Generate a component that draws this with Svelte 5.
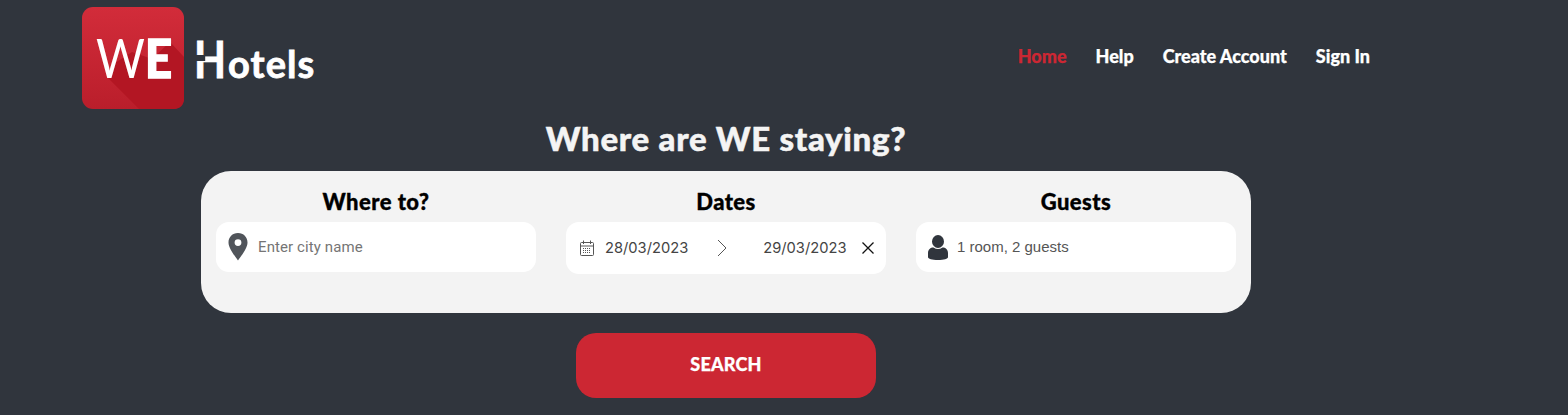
<script lang="ts">
  const links = [
    { label: 'Home', active: true },
    { label: 'Help' },
    { label: 'Create Account' },
    { label: 'Sign In' },
  ];
</script>

<div class="page">
  <header class="top">
    <a class="brand" href="#home">
      <svg class="mark" width="102" height="102" viewBox="0 0 102 102">
        <defs>
          <linearGradient id="redfade" x1="0" y1="0" x2="0" y2="1">
            <stop offset="0" stop-color="#d22c3a" />
            <stop offset="1" stop-color="#ba1e2b" />
          </linearGradient>
        </defs>
        <rect width="102" height="102" rx="11" fill="url(#redfade)" />
        <path d="M26 71 L57 102 L91 102 Q102 102 102 91 L102 50 L88 35 L70 52 L50 45 L30 58 Z" fill="#b31623" />
        <text class="mark-we" x="14" y="71" textLength="76" lengthAdjust="spacingAndGlyphs">W<tspan class="mark-e">E</tspan></text>
      </svg>
      <span class="wordmark"><b class="big-h">H<i class="notch"></i></b>otels</span>
    </a>
    <nav class="links">
      {#each links as link}
        <a href="#{link.label}" class:active={link.active}>{link.label}</a>
      {/each}
    </nav>
  </header>

  <main class="search">
    <h1>Where are WE staying?</h1>
    <section class="panel">
      <div class="field">
        <h2>Where to?</h2>
        <div class="box">
          <svg class="ico" width="20" height="28" viewBox="0 0 20 28">
            <path fill="#50545a" fill-rule="evenodd" d="M10 0C4.4 0 .5 4.200 .5 9.500 .5 15.500 7 23 10 27.500 13 23 19.500 15.500 19.500 9.500 19.500 4.200 15.600 0 10 0ZM10 6.200a3.400 3.400 0 1 1 0 6.800 3.400 3.400 0 0 1 0-6.800Z" />
          </svg>
          <input class="city" placeholder="Enter city name" />
        </div>
      </div>

      <div class="field">
        <h2>Dates</h2>
        <div class="box dates">
          <svg class="cal" width="14" height="16" viewBox="0 0 14 16" fill="none" stroke="#555" stroke-width="1">
            <rect x=".5" y="2.500" width="13" height="13" rx="1" />
            <path d="M.5 6h13M3.500 .5v3.500M10.500 .5v3.500" />
            <path d="M3 8.500h8M3 10.500h8M3 12.500h8" stroke-dasharray="1 1" />
          </svg>
          <span class="date">28/03/2023</span>
          <svg class="arrow" width="10" height="18" viewBox="0 0 10 18" fill="none" stroke="#555" stroke-width="1">
            <path d="M1 1l8 8-8 8" />
          </svg>
          <span class="date second">29/03/2023</span>
          <svg class="clear" width="12" height="12" viewBox="0 0 12 12" fill="none" stroke="#111" stroke-width="1.300">
            <path d="M.5 .5l11 11M11.500 .5l-11 11" />
          </svg>
        </div>
      </div>

      <div class="field">
        <h2>Guests</h2>
        <div class="box">
          <svg class="ico guest" width="20" height="25" viewBox="0 0 20 25">
            <ellipse cx="10" cy="6.500" rx="6" ry="6.500" fill="#30353d" />
            <path fill="#30353d" d="M0 18c0-3.500 2.500-5.500 5.500-5.500 1.500 1 3 1.500 4.500 1.500s3-.5 4.500-1.500c3 0 5.500 2 5.500 5.500v4c0 2-4 3-10 3s-10-1-10-3Z" />
          </svg>
          <span class="guests">1 room, 2 guests</span>
        </div>
      </div>
    </section>
    <button class="go">SEARCH</button>
  </main>
</div>

<style>
  :global(body) {
    background: #30353d;
    overflow: hidden;
  }

  .page {
    height: 415px;
    font-family: "Lato", sans-serif;
  }

  .top {
    display: flex;
    align-items: flex-start;
    justify-content: space-between;
    padding: 7px 198px 0 82px;
    height: 113px;
    box-sizing: border-box;
  }

  .brand {
    display: flex;
    align-items: flex-start;
    color: #fff;
    text-decoration: none;
  }

  .mark-we {
    font: 400 54px "Lato", sans-serif;
    fill: #fff;
  }
  .mark-e {
    font-weight: 900;
    stroke: #fff;
    stroke-width: 1.500px;
  }

  .wordmark {
    margin: 25px 0 0 10px;
    font-size: 38px;
    line-height: 52px;
    font-weight: 700;
    letter-spacing: 1.100px;
    -webkit-text-stroke: 0.8px #fff;
    white-space: nowrap;
  }

  /* tall narrow H of the logo, with the cut in its left stem */
  .big-h {
    display: inline-block;
    position: relative;
    width: 34px;
    font-size: 52px;
    line-height: 52px;
    font-weight: 700;
    transform: scaleX(0.8);
    transform-origin: 0 50%;
  }

  .notch {
    position: absolute;
    left: 0;
    top: 23px;
    width: 14px;
    height: 6px;
    background: #30353d;
  }

  .links {
    display: flex;
    gap: 29px;
    margin-top: 39px;
    font-size: 18px;
    font-weight: 900;
    line-height: 20px;
    -webkit-text-stroke: 0.25px currentColor;
  }

  .links a {
    color: #fff;
    text-decoration: none;
  }
  .links a.active {
    color: #cc2733;
  }

  .search {
    width: 1050px;
    margin-left: 201px;
    display: flex;
    flex-direction: column;
    align-items: center;
  }

  h1 {
    margin: 0;
    height: 58px;
    color: #f4f4f4;
    font-size: 33px;
    line-height: 50px;
    font-weight: 900;
    letter-spacing: 0.7px;
    -webkit-text-stroke: 0.5px #f4f4f4;
  }

  .panel {
    width: 100%;
    height: 142px;
    box-sizing: border-box;
    padding: 17px 15px 0;
    display: grid;
    grid-template-columns: repeat(3, 320px);
    gap: 30px;
    align-items: start;
    background: #f3f3f3;
    border-radius: 30px;
  }

  h2 {
    margin: 0 0 6px;
    height: 28px;
    text-align: center;
    color: #000;
    font-size: 22px;
    line-height: 28px;
    font-weight: 900;
    letter-spacing: 0.45px;
    -webkit-text-stroke: 0.35px #000;
  }

  .box {
    display: flex;
    align-items: center;
    height: 50px;
    padding-left: 12px;
    background: #fff;
    border-radius: 13px;
    color: #555;
    font-size: 15px;
  }

  .ico {
    flex: none;
    margin-right: 10px;
  }
  .guest {
    margin-right: 9px;
  }

  .city {
    flex: 1;
    min-width: 0;
    border: 0;
    outline: 0;
    padding: 0;
    background: none;
    font: 400 15px "Roboto", sans-serif;
    letter-spacing: 0.1px;
  }
  .city::placeholder {
    color: #757575;
    opacity: 1;
  }

  .dates {
    height: 52px;
    padding-left: 14px;
  }
  .cal {
    flex: none;
    margin-right: 11px;
  }
  .date {
    font: 400 14.700px "Inter", sans-serif;
    color: #444;
    margin-bottom: 1px;
  }
  .arrow {
    flex: none;
    margin: 0 0 0 29px;
  }
  .second {
    margin-left: 36px;
  }
  .clear {
    flex: none;
    margin-left: 16px;
  }

  .guests {
    font: 400 15px "Liberation Sans", sans-serif;
    color: #555;
    margin-bottom: 2px;
  }

  .go {
    width: 300px;
    height: 65px;
    margin-top: 20px;
    padding: 0 0 4px;
    border: 0;
    border-radius: 20px;
    background: #cc2733;
    color: #fff;
    font: 900 18px "Lato", sans-serif;
    letter-spacing: 0.2px;
    -webkit-text-stroke: 0.25px #fff;
  }
</style>
